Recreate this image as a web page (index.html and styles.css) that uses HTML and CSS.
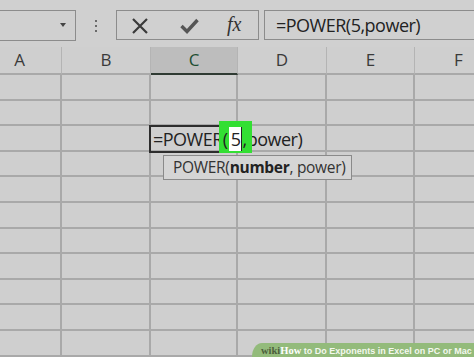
FILE: index.html
```html
<!DOCTYPE html>
<html>
<head>
<meta charset="utf-8">
<link rel="stylesheet" href="styles.css">
</head>
<body>
<div class="screen">
  <div class="toolbar">
    <div class="namebox"><span class="caret"></span></div>
    <div class="grip"><i></i><i></i><i></i></div>
    <div class="fxbox">
      <svg class="ico-x" width="18" height="18" viewBox="0 0 18 18"><path d="M2 2 L16 16 M16 2 L2 16" stroke="#3a3a3a" stroke-width="2.2" fill="none"/></svg>
      <svg class="ico-check" width="19" height="16" viewBox="0 0 19 16"><path d="M1.5 8 L7 13.5 L17.5 2" stroke="#555" stroke-width="3.4" fill="none"/></svg>
      <span class="fx">fx</span>
    </div>
    <div class="formula">=POWER(5,power)</div>
  </div>

  <div class="sheet">
    <div class="hd">A</div><div class="hd">B</div><div class="hd active">C</div><div class="hd">D</div><div class="hd">E</div><div class="hd">F</div>
    <div class="c"></div><div class="c"></div><div class="c"></div><div class="c"></div><div class="c"></div><div class="c"></div>
    <div class="c"></div><div class="c"></div><div class="c"></div><div class="c"></div><div class="c"></div><div class="c"></div>
    <div class="c"></div><div class="c"></div><div class="c"></div><div class="c"></div><div class="c"></div><div class="c"></div>
    <div class="c"></div><div class="c"></div><div class="c"></div><div class="c"></div><div class="c"></div><div class="c"></div>
    <div class="c"></div><div class="c"></div><div class="c"></div><div class="c"></div><div class="c"></div><div class="c"></div>
    <div class="c"></div><div class="c"></div><div class="c"></div><div class="c"></div><div class="c"></div><div class="c"></div>
    <div class="c"></div><div class="c"></div><div class="c"></div><div class="c"></div><div class="c"></div><div class="c"></div>
    <div class="c"></div><div class="c"></div><div class="c"></div><div class="c"></div><div class="c"></div><div class="c"></div>
    <div class="c"></div><div class="c"></div><div class="c"></div><div class="c"></div><div class="c"></div><div class="c"></div>
    <div class="c"></div><div class="c"></div><div class="c"></div><div class="c"></div><div class="c"></div><div class="c"></div>
    <div class="c"></div><div class="c"></div><div class="c"></div><div class="c"></div><div class="c"></div><div class="c"></div>
  </div>

  <div class="editor">=POWE<span class="hl">R</span><span class="mark">(<span class="sel">5</span>,</span>power)</div>
  <div class="tip">POWER(<b>number</b>, power)</div>

  <div class="brand"><span class="wiki">wiki</span><span class="how">How</span> to Do Exponents in Excel on PC or Mac</div>
</div>
</body>
</html>
```

FILE: styles.css
```css
html, body {
  margin: 0;
  padding: 0;
  background: #cfcfcf;
}
.screen {
  position: relative;
  width: 474px;
  height: 357px;
  overflow: hidden;
  background: #cfcfcf;
  font-family: "Open Sans", "Noto Sans", sans-serif;
  color: #2b2b2b;
}
.toolbar {
  height: 47px;
  box-sizing: border-box;
  padding-top: 10px;
  display: flex;
  align-items: flex-start;
  background: #d0d0d0;
}
.namebox {
  width: 77px;
  height: 31px;
  margin-left: -1px;
  box-sizing: border-box;
  border: 1px solid #8c8c8c;
  position: relative;
}
.caret {
  position: absolute;
  left: 60px;
  top: 12px;
  width: 0;
  height: 0;
  border-left: 3.5px solid transparent;
  border-right: 3.5px solid transparent;
  border-top: 4px solid #444;
}
.grip {
  width: 40px;
  height: 31px;
  display: flex;
  flex-direction: column;
  align-items: center;
  justify-content: center;
  gap: 3px;
}
.grip i {
  display: block;
  width: 2px;
  height: 2px;
  background: #6a6a6a;
}
.fxbox {
  width: 143px;
  height: 30px;
  box-sizing: border-box;
  border: 1px solid #8c8c8c;
  display: flex;
  align-items: center;
  position: relative;
}
.ico-x { position: absolute; left: 14px; top: 6px; }
.ico-check { position: absolute; left: 63px; top: 7px; }
.fx {
  position: absolute;
  left: 110px;
  top: 2px;
  font-family: "Liberation Serif", serif;
  font-style: italic;
  font-size: 20px;
  color: #333;
}
.formula {
  margin-left: 5px;
  flex: 1;
  height: 30px;
  margin-right: -2px;
  box-sizing: border-box;
  border: 1px solid #8c8c8c;
  padding-left: 11px;
  font-size: 18px;
  letter-spacing: -0.5px;
  line-height: 28px;
  color: #222;
}
.sheet {
  margin-left: -22px;
  display: grid;
  grid-template-columns: 84px 89px 87px 89px 88px 88px;
  grid-template-rows: 28px;
  grid-auto-rows: 25.6px;
}
.hd {
  box-sizing: border-box;
  border-right: 1px solid #b4b4b4;
  border-bottom: 2px solid #a9a9a9;
  text-align: center;
  font-size: 17px;
  line-height: 26px;
  color: #3a3a3a;
}
.hd.active {
  background: #bdbdbd;
  border-bottom: 2px solid #2f3b33;
  color: #1e4d31;
}
.c {
  box-sizing: border-box;
  border-right: 2px solid #a9a9a9;
  border-bottom: 2px solid #a9a9a9;
}
.editor {
  position: absolute;
  left: 149px;
  top: 125px;
  width: 91px;
  height: 28px;
  box-sizing: border-box;
  border: 2px solid #2d2d2d;
  padding-left: 2px;
  font-size: 18px;
  letter-spacing: -0.5px;
  line-height: 24px;
  white-space: nowrap;
  color: #222;
}
.hl, .mark {
  position: relative;
  z-index: 1;
}
.mark::before {
  content: "";
  position: absolute;
  left: -4px;
  right: -5px;
  top: -6px;
  bottom: -2px;
  background: #33df33;
  z-index: -1;
}
.hl::after {
  content: "";
  position: absolute;
  left: 7px;
  right: 0;
  top: -6px;
  bottom: -2px;
  background: #33df33;
}
.sel {
  background: #fff;
  border-right: 1.5px solid #222;
  padding: 0 1px 0 2px;
  margin-left: 1px;
}
.tip {
  position: absolute;
  left: 163px;
  top: 155px;
  width: 189px;
  height: 25px;
  box-sizing: border-box;
  border: 1px solid #8a8a8a;
  background: #d5d5d5;
  padding-left: 9px;
  font-size: 15.5px;
  letter-spacing: -0.3px;
  line-height: 23px;
  white-space: nowrap;
  color: #333;
}
.tip b { font-weight: 700; color: #222; }
.brand {
  position: absolute;
  left: 252px;
  top: 343px;
  right: 0;
  height: 16px;
  background: #93bb7b;
  border-top-left-radius: 10px 14px;
  padding-left: 9px;
  font-family: "Liberation Sans", sans-serif;
  font-weight: 700;
  font-size: 9px;
  line-height: 15px;
  color: #f4f8ef;
  white-space: nowrap;
}
.wiki {
  font-family: "Liberation Serif", serif;
  font-size: 10.5px;
  color: #4d5f3c;
}
.how {
  font-family: "Liberation Serif", serif;
  font-size: 10.5px;
  color: #ffffff;
}
```
